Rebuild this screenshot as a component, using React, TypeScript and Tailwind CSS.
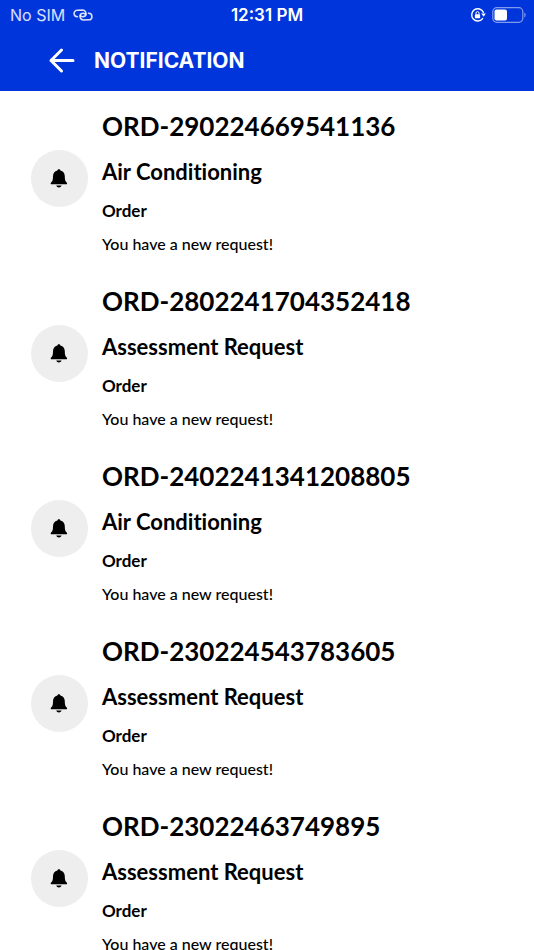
import React from 'react';

interface NotificationItem {
  id: string;
  title: string;
  type: string;
  message: string;
}

const notifications: NotificationItem[] = [
  { id: 'ORD-290224669541136', title: 'Air Conditioning', type: 'Order', message: 'You have a new request!' },
  { id: 'ORD-2802241704352418', title: 'Assessment Request', type: 'Order', message: 'You have a new request!' },
  { id: 'ORD-2402241341208805', title: 'Air Conditioning', type: 'Order', message: 'You have a new request!' },
  { id: 'ORD-230224543783605', title: 'Assessment Request', type: 'Order', message: 'You have a new request!' },
  { id: 'ORD-23022463749895', title: 'Assessment Request', type: 'Order', message: 'You have a new request!' },
];

const LinkIcon: React.FC = () => (
  <svg className="w-5 h-3" viewBox="0 0 20 12" fill="none" stroke="currentColor" strokeWidth="1.6" strokeLinecap="round">
    <path d="M4.5 7.8A3.3 3.3 0 0 1 4.3 1.2L9.2 1A4 4 0 0 1 13 4.6C13 6.5 11.5 7.7 9.8 7.7C8.5 7.7 7.7 7.2 7.3 6.4" />
    <path d="M15.5 4.2A3.3 3.3 0 0 1 15.7 10.8L10.8 11A4 4 0 0 1 7 7.4C7 5.5 8.5 4.3 10.2 4.3C11.5 4.3 12.3 4.8 12.7 5.6" />
  </svg>
);

const RotationLockIcon: React.FC = () => (
  <svg className="w-4 h-4" viewBox="0 0 16 16" fill="none">
    <path d="M12.6 11.6A6.1 6.1 0 1 1 13.4 5.4" stroke="currentColor" strokeWidth="1.4" strokeLinecap="round" />
    <path d="M11.2 6.5h4.6l-2.1 3.2z" fill="currentColor" />
    <rect x="4.9" y="7.2" width="5.2" height="4" rx="0.7" fill="currentColor" />
    <path d="M6 7.4V6.1a1.5 1.5 0 0 1 3 0v1.3" stroke="currentColor" strokeWidth="1" />
  </svg>
);

const BatteryIcon: React.FC = () => (
  <svg className="w-[34px] h-4" viewBox="0 0 34 16" fill="none">
    <rect x="0.8" y="0.7" width="30" height="14.6" rx="4" stroke="white" strokeOpacity="0.5" strokeWidth="1.2" />
    <rect x="2.5" y="2.5" width="12.5" height="11" rx="2" fill="white" />
    <path d="M32.3 5.5c1.8.6 1.8 4.4 0 5z" fill="white" fillOpacity="0.5" />
  </svg>
);

const BackIcon: React.FC = () => (
  <svg className="w-7 h-7" viewBox="0 0.5 28 28" fill="none" stroke="currentColor" strokeWidth="3" strokeLinecap="round" strokeLinejoin="round">
    <path d="M25 14H3M13.5 3.5L3 14l10.5 10.5" />
  </svg>
);

const BellIcon: React.FC = () => (
  <svg className="w-5 h-5" viewBox="0.6 0.4 20 20" fill="black">
    <path d="M9.5.6c-.8 0-1.3.5-1.5 1.2C5.2 2.5 3.6 4.8 3.6 7.6c0 3.3-.4 5-1.9 6.3-.3.3-.4.6-.4.9 0 .6.5.9 1.1.9h14.2c.6 0 1.1-.3 1.1-.9 0-.3-.1-.6-.4-.9-1.5-1.3-1.9-3-1.9-6.3 0-2.8-1.6-5.100-4.4-5.800C10.800 1.100 10.300.6 9.500.6z" />
    <path d="M6.8 17h5.400c-.4 1.300-1.400 2-2.700 2s-2.300-.7-2.700-2z" />
  </svg>
);

const StatusBar: React.FC = () => (
  <div className="grid grid-cols-3 items-center h-[30px] px-2">
    <div className="flex items-center gap-2 pl-0.5 text-base leading-5 text-white/85">
      <span>No SIM</span>
      <LinkIcon />
    </div>
    <span className="text-center text-[17px] leading-5 font-semibold">12:31 PM</span>
    <div className="flex items-center justify-end gap-1.5">
      <RotationLockIcon />
      <BatteryIcon />
    </div>
  </div>
);

const NotificationRow: React.FC<{ item: NotificationItem }> = ({ item }) => (
  <li className="flex items-center gap-3.5 pl-[31px] pr-4 py-3.5">
    <div className="flex items-center justify-center shrink-0 size-[57px] rounded-full bg-[#eeeeee]">
      <BellIcon />
    </div>
    <div className="min-w-0">
      <h2 className="text-[26px] leading-[42px] font-bold">{item.id}</h2>
      <h3 className="mt-[11px] text-[22px] leading-7 font-bold">{item.title}</h3>
      <p className="mt-[13px] text-[17px] leading-6 font-bold">{item.type}</p>
      <p className="mt-[13px] text-base leading-4 font-medium">{item.message}</p>
    </div>
  </li>
);

const App: React.FC = () => {
  return (
    <div className="flex flex-col h-screen bg-white text-black">
      <header className="shrink-0 bg-[#0035dc] text-white font-[Inter,sans-serif]">
        <StatusBar />
        <div className="flex items-center gap-[18px] h-[61px] pl-12">
          <button type="button" aria-label="Back">
            <BackIcon />
          </button>
          <h1 className="text-[21px] leading-7 font-bold">NOTIFICATION</h1>
        </div>
      </header>

      <main className="flex-1 min-h-0 overflow-y-auto [scrollbar-width:none] [font-variant-ligatures:none] font-[Lato,sans-serif]">
        <ul>
          {notifications.map((item) => (
            <NotificationRow key={item.id} item={item} />
          ))}
        </ul>
      </main>
    </div>
  );
};

export default App;
